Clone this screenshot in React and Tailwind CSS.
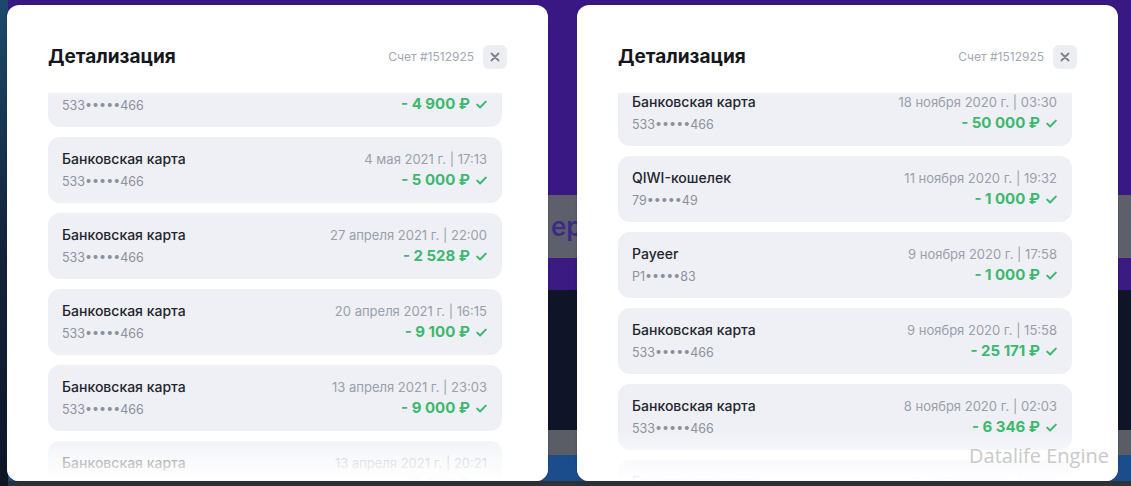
import React from 'react';

const LEFT = [
  { title: 'Банковская карта', num: '533•••••466', date: '5 мая 2021 г. | 12:40', amount: '- 4 900 ₽' },
  { title: 'Банковская карта', num: '533•••••466', date: '4 мая 2021 г. | 17:13', amount: '- 5 000 ₽' },
  { title: 'Банковская карта', num: '533•••••466', date: '27 апреля 2021 г. | 22:00', amount: '- 2 528 ₽' },
  { title: 'Банковская карта', num: '533•••••466', date: '20 апреля 2021 г. | 16:15', amount: '- 9 100 ₽' },
  { title: 'Банковская карта', num: '533•••••466', date: '13 апреля 2021 г. | 23:03', amount: '- 9 000 ₽' },
  { title: 'Банковская карта', num: '533•••••466', date: '13 апреля 2021 г. | 20:21', amount: '- 3 000 ₽' },
];

const RIGHT = [
  { title: 'Банковская карта', num: '533•••••466', date: '18 ноября 2020 г. | 03:30', amount: '- 50 000 ₽' },
  { title: 'QIWI-кошелек', num: '79•••••49', date: '11 ноября 2020 г. | 19:32', amount: '- 1 000 ₽' },
  { title: 'Payeer', num: 'P1•••••83', date: '9 ноября 2020 г. | 17:58', amount: '- 1 000 ₽' },
  { title: 'Банковская карта', num: '533•••••466', date: '9 ноября 2020 г. | 15:58', amount: '- 25 171 ₽' },
  { title: 'Банковская карта', num: '533•••••466', date: '8 ноября 2020 г. | 02:03', amount: '- 6 346 ₽' },
  { title: 'Банковская карта', num: '533•••••466', date: '7 ноября 2020 г. | 11:20', amount: '- 2 000 ₽' },
];

function Check() {
  return (
    <svg width="11" height="9" viewBox="0 0 11 9" fill="none" className="ml-[6px]">
      <path d="M1.2 4.6l2.9 2.9L9.8 1.6" stroke="#3db86e" strokeWidth="2" strokeLinecap="round" strokeLinejoin="round" />
    </svg>
  );
}

function Row({ r }) {
  return (
    <div className="h-[66px] shrink-0 rounded-[12px] bg-[#eef0f6] pl-[14px] pr-[15px] pt-[12px] flex justify-between">
      <div>
        <div className="text-[14px] leading-[20px] font-medium text-[#23262d]">{r.title}</div>
        <div className="mt-[3px] text-[12.5px] leading-[20px] text-[#8c919d]">{r.num}</div>
      </div>
      <div className="flex flex-col items-end">
        <div className="text-[13px] leading-[20px] text-[#9a9fab]">{r.date}</div>
        <div className="mt-[1px] flex items-center text-[15px] leading-[20px] font-bold text-[#3db86e]">
          {r.amount}
          <Check />
        </div>
      </div>
    </div>
  );
}

function Modal({ rows, offset }) {
  return (
    <div className="w-[541px] h-[476px] bg-white rounded-[12px] flex flex-col overflow-hidden shadow-[0_0_2px_rgba(0,0,0,0.3)]">
      <div className="h-[88px] shrink-0 pt-[16px] pl-[41px] pr-[41px] flex items-center justify-between">
        <h2 className="text-[19px] font-bold text-[#15171c]">Детализация</h2>
        <div className="flex items-center gap-[9px]">
          <span className="text-[12px] text-[#a3a8b3]">Счет #1512925</span>
          <button className="h-[24px] w-[24px] rounded-[6px] bg-[#eceef4] flex items-center justify-center">
            <svg width="10" height="10" viewBox="0 0 10 10" fill="none">
              <path d="M1.5 1.5l7 7M8.5 1.5l-7 7" stroke="#7c818d" strokeWidth="1.8" strokeLinecap="round" />
            </svg>
          </button>
        </div>
      </div>
      <div className="relative flex-1 overflow-hidden pl-[41px] pr-[46px]">
        <div className={`flex flex-col gap-[10px] ${offset}`}>
          {rows.map((r, i) => (
            <Row key={i} r={r} />
          ))}
        </div>
        <div className="absolute left-0 right-0 bottom-0 h-[50px] bg-gradient-to-b from-white/0 via-white/60 to-white" />
      </div>
    </div>
  );
}

export default function App() {
  return (
    <div className="relative w-[1131px] h-[486px] overflow-hidden font-['Inter','Noto_Sans',sans-serif]">
      {/* blurred page behind the modals */}
      <div className="flex flex-col h-full">
        <div className="h-[195px] bg-[#3a1884]" />
        <div className="h-[63px] bg-[#5d5f6d] flex items-center pl-[551px]">
          <span className="text-[26px] font-semibold text-[#3d2a86]">ер</span>
        </div>
        <div className="h-[32px] bg-[#3b1a82]" />
        <div className="h-[140px] bg-[#0f1527]" />
        <div className="h-[25px] bg-[#5a5c66]" />
        <div className="h-[26px] bg-[#1b4c8c]" />
        <div className="flex-1 bg-[#2e3137]" />
      </div>
      <div className="absolute left-0 top-0 bottom-0 w-[8px] bg-gradient-to-b from-[#1c4a6c] via-[#14243c] to-[#0e1626]" />

      <div className="absolute inset-0 flex pt-[5px] pl-[7px] gap-[29px]">
        <Modal rows={LEFT} offset="-mt-[32px]" />
        <Modal rows={RIGHT} offset="-mt-[13px]" />
      </div>

      <div className="absolute right-[22px] top-[441px] text-[20px] text-[#c9c9c9] font-['Open_Sans',sans-serif]">
        Datalife Engine
      </div>
    </div>
  );
}
